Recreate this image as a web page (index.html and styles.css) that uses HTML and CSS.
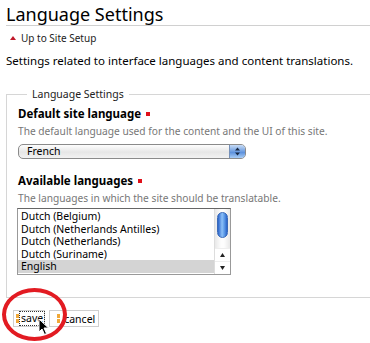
FILE: index.html
```html
<!DOCTYPE html>
<html>
<head>
<meta charset="utf-8">
<link rel="stylesheet" href="styles.css">
</head>
<body>
<h1 class="title">Language Settings</h1>
<a class="up-link" href="#"><span class="up-arrow"></span>Up to Site Setup</a>
<p class="intro">Settings related to interface languages and content translations.</p>
<form class="form">
  <fieldset class="fieldset">
    <legend class="legend">Language Settings</legend>
    <div class="field">
      <div class="label">Default site language <span class="required"></span></div>
      <div class="help">The default language used for the content and the UI of this site.</div>
      <div class="select">
        <span class="select-text">French</span>
        <span class="select-btn">
          <svg width="7" height="9" viewBox="0 0 7 9"><path d="M3.5 0.5 L6 3.5 L1 3.5 Z M3.5 8.5 L6 5.5 L1 5.5 Z" fill="#1a2a44"/></svg>
        </span>
      </div>
    </div>
    <div class="field field-second">
      <div class="label">Available languages <span class="required"></span></div>
      <div class="help">The languages in which the site should be translatable.</div>
      <div class="listbox">
        <ul class="options">
          <li class="option">Dutch (Belgium)</li>
          <li class="option">Dutch (Netherlands Antilles)</li>
          <li class="option">Dutch (Netherlands)</li>
          <li class="option">Dutch (Suriname)</li>
          <li class="option option-selected">English</li>
        </ul>
        <div class="scrollbar">
          <div class="scroll-track">
            <div class="scroll-thumb"></div>
          </div>
          <div class="scroll-arrow">
            <svg width="5" height="4" viewBox="0 0 5 4"><path d="M2.5 0 L5 4 L0 4 Z" fill="#222"/></svg>
          </div>
          <div class="scroll-arrow">
            <svg width="5" height="4" viewBox="0 0 5 4"><path d="M0 0 L5 0 L2.5 4 Z" fill="#222"/></svg>
          </div>
        </div>
      </div>
    </div>
  </fieldset>
  <div class="buttons">
    <span class="button button-save"><span class="button-mark"></span><span class="button-focus">save</span></span>
    <span class="button button-cancel"><span class="button-mark"></span>cancel</span>
    <span class="highlight-ring"></span>
    <svg class="cursor" width="12" height="18" viewBox="0 0 12 18"><path d="M1 1 L1 14 L4 11 L6.5 16.5 L8.5 15.5 L6 10 L10.5 10 Z" fill="#000" stroke="#fff" stroke-width="1"/></svg>
  </div>
</form>
</body>
</html>
```
FILE: styles.css
```css
html, body {
  margin: 0;
  padding: 0;
  background: #fff;
}
body {
  font-family: "Noto Sans", "DejaVu Sans", sans-serif;
  color: #000;
  padding: 3px 0 0 6px;
  width: 364px;
  height: 340px;
  overflow: hidden;
}
.title {
  margin: 0;
  font-size: 18px;
  font-weight: normal;
  line-height: 22px;
  border-bottom: 1px solid #d0d0d0;
}
.up-link {
  display: flex;
  align-items: center;
  margin: 6px 0 0 4px;
  font-size: 10px;
  line-height: 12px;
  color: #222;
  text-decoration: none;
}
.up-arrow {
  width: 0;
  height: 0;
  border-left: 3px solid transparent;
  border-right: 3px solid transparent;
  border-bottom: 4px solid #c0182a;
  margin-right: 5px;
}
.intro {
  margin: 10px 0 0 0;
  font-size: 11.5px;
  line-height: 14px;
}
.form {
  margin: 0;
}
.fieldset {
  margin: 19px 0 0 0;
  padding: 6px 0 22px 11px;
  border: 1px solid #d6d6d6;
  border-right: none;
}
.legend {
  margin-left: 9px;
  padding: 0 5px;
  font-size: 10.5px;
  color: #222;
}
.label {
  font-size: 11.5px;
  font-weight: bold;
  line-height: 14px;
  display: flex;
  align-items: center;
  gap: 5px;
}
.required {
  display: inline-block;
  width: 4px;
  height: 4px;
  background: #e0101a;
}
.help {
  margin-top: 4px;
  font-size: 10.2px;
  line-height: 13px;
  color: #777;
}
.select {
  margin-top: 6px;
  width: 226px;
  height: 13px;
  border: 1px solid #8a8a8a;
  border-radius: 5px;
  background: linear-gradient(#fdfdfd, #e6e6e6 55%, #f2f2f2);
  display: flex;
  align-items: center;
  justify-content: space-between;
  overflow: hidden;
}
.select-text {
  font-size: 10.5px;
  padding-left: 8px;
  line-height: 13px;
}
.select-btn {
  width: 15px;
  height: 13px;
  background: linear-gradient(#c8dcf6, #6d9de0 50%, #5a8fdc 55%, #a9cdf5);
  border-left: 1px solid #7590b8;
  display: flex;
  align-items: center;
  justify-content: center;
}
.field-second {
  margin-top: 15px;
}
.listbox {
  margin-top: 3px;
  margin-left: -1px;
  width: 212px;
  height: 65px;
  border: 1px solid #999;
  border-top-color: #666;
  display: flex;
}
.options {
  list-style: none;
  margin: 0;
  padding: 1px 0 0 0;
  flex: 1;
}
.option {
  font-size: 10.5px;
  line-height: 12.6px;
  padding-left: 3px;
  color: #000;
}
.option-selected {
  background: #d4d4d4;
}
.scrollbar {
  width: 15px;
  border-left: 1px solid #ddd;
  display: flex;
  flex-direction: column;
  background: #fff;
}
.scroll-track {
  flex: 1;
  padding: 3px 2px;
  background: linear-gradient(to right, #e8e8e8, #fdfdfd 40%, #fdfdfd 60%, #e8e8e8);
}
.scroll-thumb {
  height: 24px;
  border-radius: 6px;
  background: linear-gradient(to right, #2a63c8, #8cc0f8 45%, #5d9be8 70%, #2a63c8);
  border: 1px solid #3a6ab8;
}
.scroll-arrow {
  height: 12px;
  display: flex;
  align-items: center;
  justify-content: center;
  border-top: 1px solid #eee;
}
.buttons {
  position: relative;
  display: flex;
  gap: 4px;
  margin: 12px 0 0 7px;
}
.button {
  display: flex;
  align-items: center;
  height: 15px;
  border: 1px solid #cfcfcf;
  font-size: 10.5px;
  color: #000;
  background: #fff;
}
.button-save {
  padding: 0 0 0 2px;
}
.button-cancel {
  padding: 0 3px 0 7px;
}
.button-mark {
  width: 3px;
  height: 9px;
  margin-right: 4px;
  background: linear-gradient(#f0a838 0, #f0a838 4px, transparent 4px, transparent 5px, #f0a838 5px);
}
.button-save .button-mark {
  margin-right: 1px;
}
.button-focus {
  outline: 1px dotted #333;
  outline-offset: 0;
  padding: 0 1px;
  line-height: 13px;
}
.highlight-ring {
  position: absolute;
  left: -11px;
  top: -22px;
  width: 57px;
  height: 45px;
  border: 4px solid #e21b22;
  border-radius: 50%;
}
.cursor {
  position: absolute;
  left: 25px;
  top: 8px;
}
```
